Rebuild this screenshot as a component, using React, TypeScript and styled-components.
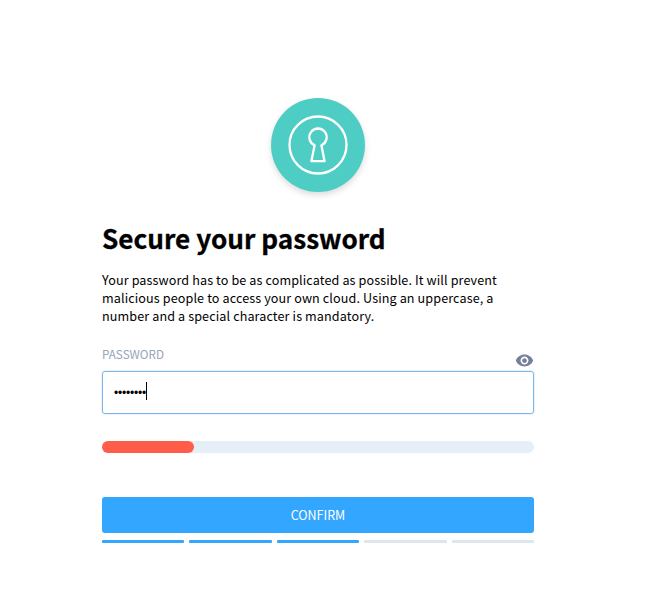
import React, { useState } from "react";
import styled, { createGlobalStyle } from "styled-components";

const GlobalStyle = createGlobalStyle`
  *, *::before, *::after { box-sizing: border-box; }
  body {
    margin: 0;
    background: #fff;
    color: #000;
    font-family: "Noto Sans CJK SC", "Noto Sans", sans-serif;
  }
`;

const Page = styled.main`
  width: 432px;
  margin-left: 102px;
  padding-top: 98px;
  display: flex;
  flex-direction: column;
`;

const Badge = styled.div`
  width: 94px;
  height: 94px;
  align-self: center;
  border-radius: 50%;
  background: #4ecdc4;
  box-shadow: 0 3px 6px rgba(0, 0, 0, 0.14);
`;

const Title = styled.h1`
  margin: 25px 0 0;
  font-size: 26.15px;
  line-height: 42px;
  font-weight: 700;
  -webkit-text-stroke: 0.3px #000;
  white-space: nowrap;
`;

const Description = styled.p`
  margin: 12px 0 0;
  font-size: 12.6px;
  letter-spacing: 0.11px;
  line-height: 18px;
`;

const FieldHeader = styled.div`
  display: flex;
  justify-content: space-between;
  height: 25px;
  margin-top: 20px;
`;

const Label = styled.label`
  font-size: 11.7px;
  line-height: 18px;
  color: #95a4ba;
`;

const RevealButton = styled.button`
  width: 19px;
  height: 19px;
  margin-top: 6px;
  padding: 0;
  border: 0;
  background: none;
  color: #77809b;
  svg { display: block; }
`;

const Field = styled.div`
  height: 43px;
  margin-top: 1px;
  padding: 0 11px;
  display: flex;
  align-items: center;
  border: 1px solid #73b8f2;
  border-radius: 3px;
  box-shadow: 0 0 2px rgba(0, 0, 0, 0.2);
`;

const Mask = styled.span`
  width: 32px;
  font: 12px/18px "Liberation Sans", sans-serif;
  letter-spacing: -0.2px;
  white-space: nowrap;
`;

const Caret = styled.span`
  width: 1px;
  height: 18px;
  margin-top: -3px;
  background: #000;
`;

const Strength = styled.div`
  height: 12px;
  margin-top: 27px;
  border-radius: 6px;
  background: #e6eff8;
`;

const StrengthValue = styled.div`
  width: 92px;
  height: 12px;
  border-radius: 6px;
  background: #ff5c4a;
`;

const Confirm = styled.button`
  height: 36px;
  margin-top: 44px;
  padding: 0;
  border: 0;
  border-radius: 3px;
  background: #33a6ff;
  color: #fff;
  font: 12.5px/36px "Noto Sans CJK SC", "Noto Sans", sans-serif;
`;

const Steps = styled.div`
  display: grid;
  grid-template-columns: repeat(5, 1fr);
  gap: 5px;
  margin-top: 7px;
`;

const Step = styled.span<{ $done: boolean }>`
  height: 3px;
  border-radius: 1px;
  background: ${({ $done }) => ($done ? "#33a6ff" : "#dde6ef")};
`;

export default function App() {
  const [length] = useState(8);
  return (
    <>
      <GlobalStyle />
      <Page>
        <Badge>
          <svg width="94" height="94" viewBox="0 0 94 94" fill="none" stroke="#fff" strokeWidth="2.3" strokeLinejoin="round">
            <circle cx="47" cy="47" r="28.5" />
            <path d="M43.6 47.2a8.7 8.7 0 1 1 6.8 0L53.6 63.2H40.4L43.6 47.2Z" />
          </svg>
        </Badge>
        <Title>Secure your password</Title>
        <Description>
          Your password has to be as complicated as possible. It will prevent
          malicious people to access your own cloud. Using an uppercase, a
          number and a special character is mandatory.
        </Description>
        <FieldHeader>
          <Label>PASSWORD</Label>
          <RevealButton aria-label="Show password">
            <svg width="19" height="19" viewBox="0 0 24 24" fill="currentColor">
              <path d="M12 4.5C7 4.5 2.73 7.61 1 12c1.73 4.39 6 7.5 11 7.5s9.27-3.11 11-7.5c-1.73-4.39-6-7.5-11-7.5zM12 17c-2.76 0-5-2.24-5-5s2.24-5 5-5 5 2.24 5 5-2.24 5-5 5zm0-8c-1.66 0-3 1.34-3 3s1.34 3 3 3 3-1.34 3-3-1.34-3-3-3z" />
            </svg>
          </RevealButton>
        </FieldHeader>
        <Field>
          <Mask>{"•".repeat(length)}</Mask>
          <Caret />
        </Field>
        <Strength><StrengthValue /></Strength>
        <Confirm>CONFIRM</Confirm>
        <Steps>
          {[1, 2, 3, 4, 5].map((n) => <Step key={n} $done={n <= 3} />)}
        </Steps>
      </Page>
    </>
  );
}
